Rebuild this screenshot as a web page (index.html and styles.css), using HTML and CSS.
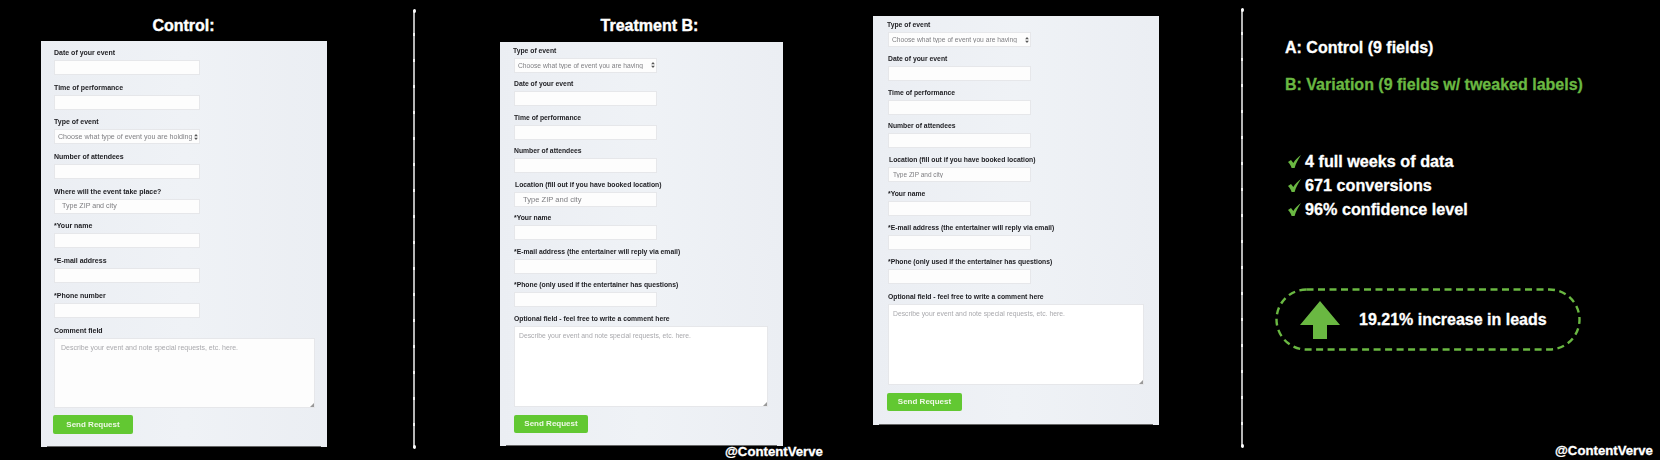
FILE: index.html
```html
<!DOCTYPE html>
<html lang="en">
<head>
    <meta charset="UTF-8">
    <title>Form label test results</title>
    <link rel="stylesheet" href="styles.css">
</head>
<body>

<div class="slide">

    <!-- Control -->
    <section class="col col-control">
        <h2>Control:</h2>
        <form class="panel panel-control">
            <div class="field"><label>Date of your event</label><input type="text"></div>
            <div class="field"><label>Time of performance</label><input type="text"></div>
            <div class="field">
                <label>Type of event</label>
                <div class="select-wrap">
                    <select><option>Choose what type of event you are holding</option></select>
                    <svg class="arrows" viewBox="0 0 5 8"><path d="M2.5 0 L5 3 H0 Z M2.5 8 L0 5 H5 Z"/></svg>
                </div>
            </div>
            <div class="field"><label>Number of attendees</label><input type="text"></div>
            <div class="field"><label>Where will the event take place?</label><input class="zip" type="text" placeholder="Type ZIP and city"></div>
            <div class="field"><label>*Your name</label><input type="text"></div>
            <div class="field"><label>*E-mail address</label><input type="text"></div>
            <div class="field"><label>*Phone number</label><input type="text"></div>
            <div class="field field-wide">
                <label>Comment field</label>
                <textarea placeholder="Describe your event and note special requests, etc. here."></textarea>
                <svg class="grip" viewBox="0 0 5 5"><path d="M5 0 V5 H0 Z"/></svg>
            </div>
            <button type="button">Send Request</button>
        </form>
    </section>

    <div class="divider divider-one"></div>

    <!-- Treatment B -->
    <section class="col col-treatment">
        <h2>Treatment B:</h2>
        <form class="panel panel-treatment">
            <div class="field">
                <label class="nudge-left">Type of event</label>
                <div class="select-wrap">
                    <select><option>Choose what type of event you are having</option></select>
                    <svg class="arrows" viewBox="0 0 5 8"><path d="M2.5 0 L5 3 H0 Z M2.5 8 L0 5 H5 Z"/></svg>
                </div>
            </div>
            <div class="field"><label>Date of your event</label><input type="text"></div>
            <div class="field"><label>Time of performance</label><input type="text"></div>
            <div class="field"><label>Number of attendees</label><input type="text"></div>
            <div class="field"><label class="nudge-right">Location (fill out if you have booked location)</label><input class="zip" type="text" placeholder="Type ZIP and city"></div>
            <div class="field"><label>*Your name</label><input type="text"></div>
            <div class="field"><label>*E-mail address (the entertainer will reply via email)</label><input type="text"></div>
            <div class="field"><label>*Phone (only used if the entertainer has questions)</label><input type="text"></div>
            <div class="field field-wide">
                <label>Optional field - feel free to write a comment here</label>
                <textarea placeholder="Describe your event and note special requests, etc. here."></textarea>
                <svg class="grip" viewBox="0 0 5 5"><path d="M5 0 V5 H0 Z"/></svg>
            </div>
            <button type="button">Send Request</button>
        </form>
    </section>

    <!-- Treatment B, second shot -->
    <section class="col col-third">
        <form class="panel panel-third">
            <div class="field">
                <label class="nudge-left">Type of event</label>
                <div class="select-wrap">
                    <select><option>Choose what type of event you are having</option></select>
                    <svg class="arrows" viewBox="0 0 5 8"><path d="M2.5 0 L5 3 H0 Z M2.5 8 L0 5 H5 Z"/></svg>
                </div>
            </div>
            <div class="field"><label>Date of your event</label><input type="text"></div>
            <div class="field"><label>Time of performance</label><input type="text"></div>
            <div class="field"><label>Number of attendees</label><input type="text"></div>
            <div class="field"><label class="nudge-right">Location (fill out if you have booked location)</label><input class="zip" type="text" placeholder="Type ZIP and city"></div>
            <div class="field"><label>*Your name</label><input type="text"></div>
            <div class="field"><label>*E-mail address (the entertainer will reply via email)</label><input type="text"></div>
            <div class="field"><label>*Phone (only used if the entertainer has questions)</label><input type="text"></div>
            <div class="field field-wide">
                <label>Optional field - feel free to write a comment here</label>
                <textarea placeholder="Describe your event and note special requests, etc. here."></textarea>
                <svg class="grip" viewBox="0 0 5 5"><path d="M5 0 V5 H0 Z"/></svg>
            </div>
            <button type="button">Send Request</button>
        </form>
    </section>

    <div class="divider divider-two"></div>

    <!-- Results -->
    <section class="results">
        <p class="variant">A: Control (9 fields)</p>
        <p class="variant variant-b">B: Variation (9 fields w/ tweaked labels)</p>

        <ul class="checks">
            <li><svg class="check" viewBox="0 0 13 13"><path d="M0 7 L3 5 L5.3 8 C7 5 10 2 13 0 C10.5 3.5 7.8 8.5 6.6 13 H3.6 C3 10.5 1.5 8.5 0 7 Z"/></svg>4 full weeks of data</li>
            <li><svg class="check" viewBox="0 0 13 13"><path d="M0 7 L3 5 L5.3 8 C7 5 10 2 13 0 C10.5 3.5 7.8 8.5 6.6 13 H3.6 C3 10.5 1.5 8.5 0 7 Z"/></svg>671 conversions</li>
            <li><svg class="check" viewBox="0 0 13 13"><path d="M0 7 L3 5 L5.3 8 C7 5 10 2 13 0 C10.5 3.5 7.8 8.5 6.6 13 H3.6 C3 10.5 1.5 8.5 0 7 Z"/></svg>96% confidence level</li>
        </ul>

        <div class="pill">
            <svg class="pill-border" viewBox="0 0 306 63"><rect x="1.5" y="1.5" width="303" height="60" rx="30" ry="30"/></svg>
            <svg class="up-arrow" viewBox="0 0 40 38"><path d="M20 0 L40 24 H27 V38 H13 V24 H0 Z"/></svg>
            <span>19.21% increase in leads</span>
        </div>
    </section>

    <div class="handle handle-one">@ContentVerve</div>
    <div class="handle handle-two">@ContentVerve</div>
</div>

</body>
</html>
```

FILE: styles.css
```css
* {
    box-sizing: border-box;
}

body {
    margin: 0;
    background-color: black;
    font-family: "Liberation Sans", Arial, sans-serif;
}

.slide {
    position: relative;
    display: flex;
    align-items: flex-start;
    width: 1660px;
    height: 460px;
    overflow: hidden;
    background-color: black;
}

/* columns */
.col h2 {
    margin: 16px 0 0;
    height: 20px;
    line-height: 20px;
    font-size: 16px;
    text-align: center;
    color: white;
    -webkit-text-stroke: 0.4px white;
}

.col-control {
    width: 286px;
    margin-left: 41px;
}

.col-control h2 {
    margin-bottom: 5px;
    padding-right: 1px;
}

.col-treatment {
    width: 283px;
    margin-left: 85px;
}

.col-treatment h2 {
    margin-bottom: 6px;
    padding-left: 16px;
}

.col-third {
    width: 286px;
    margin-left: 90px;
    padding-top: 16px;
}

.divider {
    position: relative;
    flex: none;
    width: 2px;
    background: repeating-linear-gradient(#b5b5b5 0 23px, #f2f2f2 23px 26px);
}

.divider::before,
.divider::after {
    content: "";
    position: absolute;
    left: -0.5px;
    width: 3px;
    height: 4px;
    border-radius: 50%;
    background-color: white;
}

.divider::before {
    top: -1px;
}

.divider::after {
    bottom: -1px;
}

.divider-one {
    height: 438px;
    margin: 10px 0 0 86px;
}

.divider-two {
    height: 438px;
    margin: 9px 0 0 82px;
}

/* form panels */
.panel {
    position: relative;
    display: flex;
    flex-direction: column;
    background: linear-gradient(90deg, #ebeef3, #eff2f6 50%, #ebeef3);
    filter: blur(0.3px);
}

.panel::after {
    content: "";
    position: absolute;
    left: 6px;
    right: 6px;
    bottom: 0;
    height: 1px;
    background-color: #666;
}

.panel-control {
    height: 406px;
    padding: 6px 12px 0 13px;
    row-gap: 6.7px;
    font-size: 7px;
}

.panel-treatment {
    height: 404px;
    padding: 2.5px 15px 0 14px;
    row-gap: 5.5px;
    font-size: 6.8px;
}

.panel-third {
    height: 409px;
    padding: 3px 15px 0 15px;
    row-gap: 5.8px;
    font-size: 6.8px;
}

.field {
    position: relative;
    display: flex;
    flex-direction: column;
    width: 146px;
}

.panel-treatment .field,
.panel-third .field {
    width: 143px;
}

.panel .field-wide {
    width: 100%;
}

label {
    display: block;
    height: 13px;
    line-height: 12px;
    font-weight: bold;
    white-space: nowrap;
    color: #1c1c20;
}

.nudge-left {
    margin-left: -1px;
}

.nudge-right {
    margin-left: 1px;
}

input,
select,
textarea {
    display: block;
    width: 100%;
    height: 15px;
    margin: 0;
    padding: 0 3px;
    border: 1px solid #e6e7ea;
    border-radius: 0;
    background-color: #fdfdfd;
    font-family: inherit;
    font-size: 7px;
    color: #888;
    outline: none;
}

input::placeholder,
textarea::placeholder {
    color: #a9a9ad;
    opacity: 1;
}

input.zip {
    padding-left: 7px;
    font-size: 7.1px;
}

input.zip::placeholder {
    color: #7d7d80;
}

.panel-treatment input.zip {
    padding-left: 8px;
    font-size: 7.6px;
}

.panel-third input.zip {
    padding-left: 4px;
    font-size: 6.5px;
}

.select-wrap {
    position: relative;
}

select {
    appearance: none;
    -webkit-appearance: none;
    padding-left: 3px;
    font-size: 7.1px;
    color: #808084;
}

.panel-treatment select,
.panel-third select {
    font-size: 6.7px;
}

.arrows {
    position: absolute;
    top: 4.5px;
    right: 2px;
    width: 4px;
    height: 6px;
    fill: #555;
}

textarea {
    height: 70px;
    padding: 5px 6px;
    resize: none;
}

.panel-treatment textarea,
.panel-third textarea {
    height: 81px;
    padding-left: 4px;
    font-size: 6.8px;
    background-color: white;
}

.panel-third .field-wide {
    padding-top: 1.5px;
}

.grip {
    position: absolute;
    right: 1px;
    bottom: 1px;
    width: 4px;
    height: 4px;
    fill: #999;
}

button {
    align-self: flex-start;
    width: 80px;
    height: 19px;
    margin: 1.3px 0 0 -1px;
    padding: 0;
    border: none;
    border-radius: 2px;
    background-color: #62c832;
    font-family: inherit;
    font-weight: bold;
    font-size: 8px;
    color: #eef8e6;
}

.panel-treatment button {
    width: 74px;
    height: 18px;
    margin: 2.5px 0 0 0;
}

.panel-third button {
    width: 75px;
    height: 18px;
    margin: 2.2px 0 0 -1px;
}

/* results column */
.results {
    flex: none;
    width: 320px;
    margin-left: 32px;
}

.results p,
.results ul {
    margin: 0;
    padding: 0;
}

.results .variant {
    height: 20px;
    margin-left: 10px;
    line-height: 20px;
    font-size: 16px;
    font-weight: bold;
    color: white;
    -webkit-text-stroke: 0.3px currentColor;
}

.results .variant:first-child {
    margin-top: 38px;
}

.results .variant-b {
    margin-top: 17px;
    color: #6ab842;
}

.results .checks {
    margin-top: 54px;
    list-style: none;
}

.checks li {
    display: flex;
    align-items: center;
    height: 24px;
    margin-left: 13px;
    font-size: 16.2px;
    font-weight: bold;
    color: white;
    -webkit-text-stroke: 0.3px white;
}

.check {
    flex: none;
    width: 13px;
    height: 13px;
    margin-right: 4px;
    fill: #6ab842;
    stroke: none;
}

.pill {
    position: relative;
    display: flex;
    align-items: center;
    width: 306px;
    height: 63px;
    margin-top: 67px;
    padding-left: 25px;
    font-size: 16px;
    font-weight: bold;
    color: white;
    -webkit-text-stroke: 0.3px white;
}

.pill-border {
    position: absolute;
    top: 0;
    left: 0;
    width: 306px;
    height: 63px;
    fill: none;
    stroke: #6ab842;
    stroke-width: 2.4;
    stroke-dasharray: 7 4.5;
}

.up-arrow {
    position: relative;
    flex: none;
    width: 40px;
    height: 38px;
    margin-right: 19px;
    fill: #6ab842;
}

.pill span {
    position: relative;
}

.handle {
    position: absolute;
    font-size: 13.2px;
    font-weight: bold;
    line-height: 16px;
    color: white;
    -webkit-text-stroke: 0.3px white;
}

.handle-one {
    left: 725px;
    top: 444px;
}

.handle-two {
    left: 1555px;
    top: 443px;
}
```
